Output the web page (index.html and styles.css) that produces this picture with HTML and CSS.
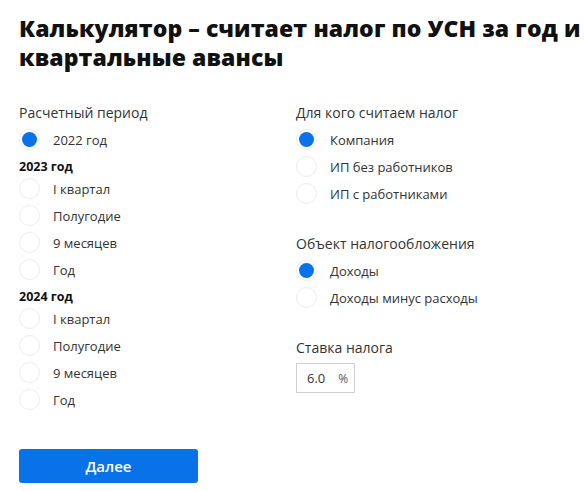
FILE: index.html
```html
<!DOCTYPE html>
<html lang="ru">
<head>
<meta charset="utf-8">
<link rel="stylesheet" href="styles.css">
</head>
<body>
<div class="page">
  <h1 class="title">Калькулятор – считает налог по УСН за год и квартальные авансы</h1>
  <div class="columns">
    <div class="col">
      <div class="group-title">Расчетный период</div>
      <label class="radio checked"><span class="dot"></span><span class="text">2022 год</span></label>
      <div class="year">2023 год</div>
      <label class="radio"><span class="dot"></span><span class="text">I квартал</span></label>
      <label class="radio"><span class="dot"></span><span class="text">Полугодие</span></label>
      <label class="radio"><span class="dot"></span><span class="text">9 месяцев</span></label>
      <label class="radio"><span class="dot"></span><span class="text">Год</span></label>
      <div class="year">2024 год</div>
      <label class="radio"><span class="dot"></span><span class="text">I квартал</span></label>
      <label class="radio"><span class="dot"></span><span class="text">Полугодие</span></label>
      <label class="radio"><span class="dot"></span><span class="text">9 месяцев</span></label>
      <label class="radio"><span class="dot"></span><span class="text">Год</span></label>
    </div>
    <div class="col">
      <div class="group-title">Для кого считаем налог</div>
      <label class="radio checked"><span class="dot"></span><span class="text">Компания</span></label>
      <label class="radio"><span class="dot"></span><span class="text">ИП без работников</span></label>
      <label class="radio"><span class="dot"></span><span class="text">ИП с работниками</span></label>
      <div class="group-title second">Объект налогообложения</div>
      <label class="radio checked"><span class="dot"></span><span class="text">Доходы</span></label>
      <label class="radio"><span class="dot"></span><span class="text">Доходы минус расходы</span></label>
      <div class="group-title third">Ставка налога</div>
      <div class="rate"><span class="rate-value">6.0</span><span class="rate-unit">%</span></div>
    </div>
  </div>
  <button class="next">Далее</button>
</div>
</body>
</html>
```
FILE: styles.css
```css
* { box-sizing: border-box; }
html, body { margin: 0; padding: 0; background: #fff; }
body { font-family: "Open Sans", "Liberation Sans", sans-serif; color: #333; }
.page { padding: 14px 2px 0 19px; }
.title {
  margin: 0;
  font-family: "Open Sans", sans-serif;
  font-weight: 800;
  font-size: 23px;
  line-height: 29px;
  color: #111;
  letter-spacing: 0.1px;
}
.columns { display: grid; grid-template-columns: 277px 1fr; margin-top: 31px; }
.col { display: flex; flex-direction: column; }
.group-title { font-size: 14px; line-height: 20px; color: #333; margin-bottom: 3px; }
.group-title.second { margin-top: 27px; }
.group-title.third { margin-top: 27px; }
.radio { display: flex; align-items: center; height: 27px; }
.dot {
  width: 21px; height: 21px; border-radius: 50%;
  border: 1px solid #ececec; flex: none; position: relative;
}
.radio.checked .dot::after {
  content: ""; position: absolute; left: 2px; top: 2px;
  width: 15px; height: 15px; border-radius: 50%; background: #0a72e8;
}
.text { margin-left: 13px; font-size: 13px; color: #333; }
.year { font-size: 12.5px; font-weight: 700; color: #111; line-height: 16px; margin-top: 6px; margin-bottom: 0; }
.rate {
  margin-top: 2px; width: 59px; height: 30px; border: 1px solid #cfcfcf;
  display: flex; align-items: center; padding-left: 10px; font-size: 13px;
}
.rate-unit { margin-left: 13px; font-size: 12px; color: #555; }
.next {
  margin-top: 36px; width: 179px; height: 34px; border: none; border-radius: 3px;
  background: #0a72e8; color: #fff; font-family: "Open Sans", sans-serif;
  font-size: 15px; font-weight: 600; display: block;
}
```
